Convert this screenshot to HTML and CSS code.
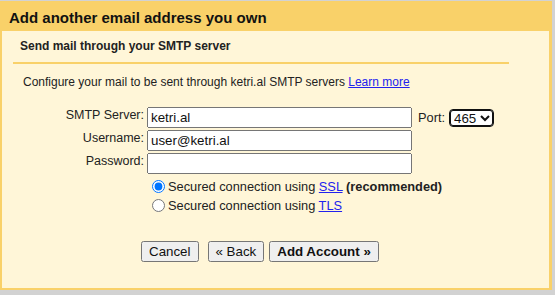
FILE: index.html
```html
<!DOCTYPE html>
<html>
<head>
<meta charset="utf-8">
<link rel="stylesheet" href="styles.css">
</head>
<body>
<div class="dialog">
  <div class="title">Add another email address you own</div>
  <div class="panel">
    <div class="sub">Send mail through your SMTP server</div>
    <p class="intro">Configure your mail to be sent through ketri.al SMTP servers <a href="#">Learn more</a></p>
    <div class="form">
      <label class="lbl">SMTP Server:</label>
      <div class="field">
        <input class="txt" type="text" value="ketri.al">
        <span class="port-lbl">Port:</span>
        <select class="sel"><option>465</option><option>587</option></select>
      </div>
      <label class="lbl">Username:</label>
      <div class="field"><input class="txt" type="text" value="user@ketri.al"></div>
      <label class="lbl">Password:</label>
      <div class="field"><input class="txt" type="password" value=""></div>
      <span></span>
      <div class="radios">
        <label class="radio"><input type="radio" name="sec" checked>Secured connection using <a href="#">SSL</a> <b>(recommended)</b></label>
        <label class="radio"><input type="radio" name="sec">Secured connection using <a href="#">TLS</a></label>
      </div>
    </div>
    <div class="buttons">
      <button class="btn">Cancel</button>
      <button class="btn back">« Back</button>
      <button class="btn primary">Add Account »</button>
    </div>
  </div>
</div>
</body>
</html>
```

FILE: styles.css
```css
html, body {
  margin: 0;
  padding: 0;
}
body {
  background: #d2d2d2;
  padding-top: 1px;
  font-family: "Liberation Sans", Arial, sans-serif;
  color: #222;
  height: 294px;
}
.dialog {
  width: 552px;
  height: 289px;
  background: #f9d169;
  display: flex;
  flex-direction: column;
}
.title {
  height: 29px;
  padding: 1px 0 0 9px;
  font-size: 15px;
  font-weight: bold;
  line-height: 31px;
  color: #111;
}
.panel {
  flex: 1;
  margin: 0 3px 2px 2px;
  background: #fff6d8;
}
.sub {
  margin: 0 40px 0 11px;
  padding: 8px 7px;
  border-bottom: 2px solid #f9d169;
  font-size: 12px;
  font-weight: bold;
  line-height: 15px;
}
.intro {
  margin: 10px 0 0 21px;
  font-size: 12px;
  line-height: 16px;
}
a {
  color: #2222ee;
}
.form {
  margin-top: 17px;
  display: grid;
  grid-template-columns: 142px auto;
  column-gap: 3px;
  row-gap: 2px;
  font-size: 12.5px;
}
.lbl {
  text-align: right;
  line-height: 15px;
  padding-top: 1px;
}
.field {
  display: flex;
  align-items: center;
}
.txt {
  width: 265px;
  height: 21px;
  box-sizing: border-box;
  margin: 0;
  font-family: "Liberation Sans", Arial, sans-serif;
  font-size: 13.33px;
  color: #111;
}
.port-lbl {
  margin: 0 4px 0 6px;
  font-size: 12.8px;
}
.sel {
  font-family: "Liberation Sans", Arial, sans-serif;
  font-size: 13.33px;
  margin: 0;
  height: 18px;
  border: 1px solid #111;
  border-radius: 4px;
  box-shadow: inset 0 0 0 1px #111;
  background: #fff;
  color: #111;
}
.radios {
  display: flex;
  flex-direction: column;
  margin-top: 1px;
  font-size: 12.8px;
}
.radio {
  line-height: 19px;
  height: 19px;
}
.radio input {
  margin: 3px 3px 0 5px;
  vertical-align: top;
}
.buttons {
  margin: 26px 0 0 139px;
  display: flex;
}
.btn {
  font-family: "Liberation Sans", Arial, sans-serif;
  font-size: 13.33px;
  height: 21px;
  padding: 1px 6px;
  margin: 0;
  color: #111;
}
.back {
  margin-left: 9px;
}
.primary {
  margin-left: 5px;
  font-weight: bold;
}
```
